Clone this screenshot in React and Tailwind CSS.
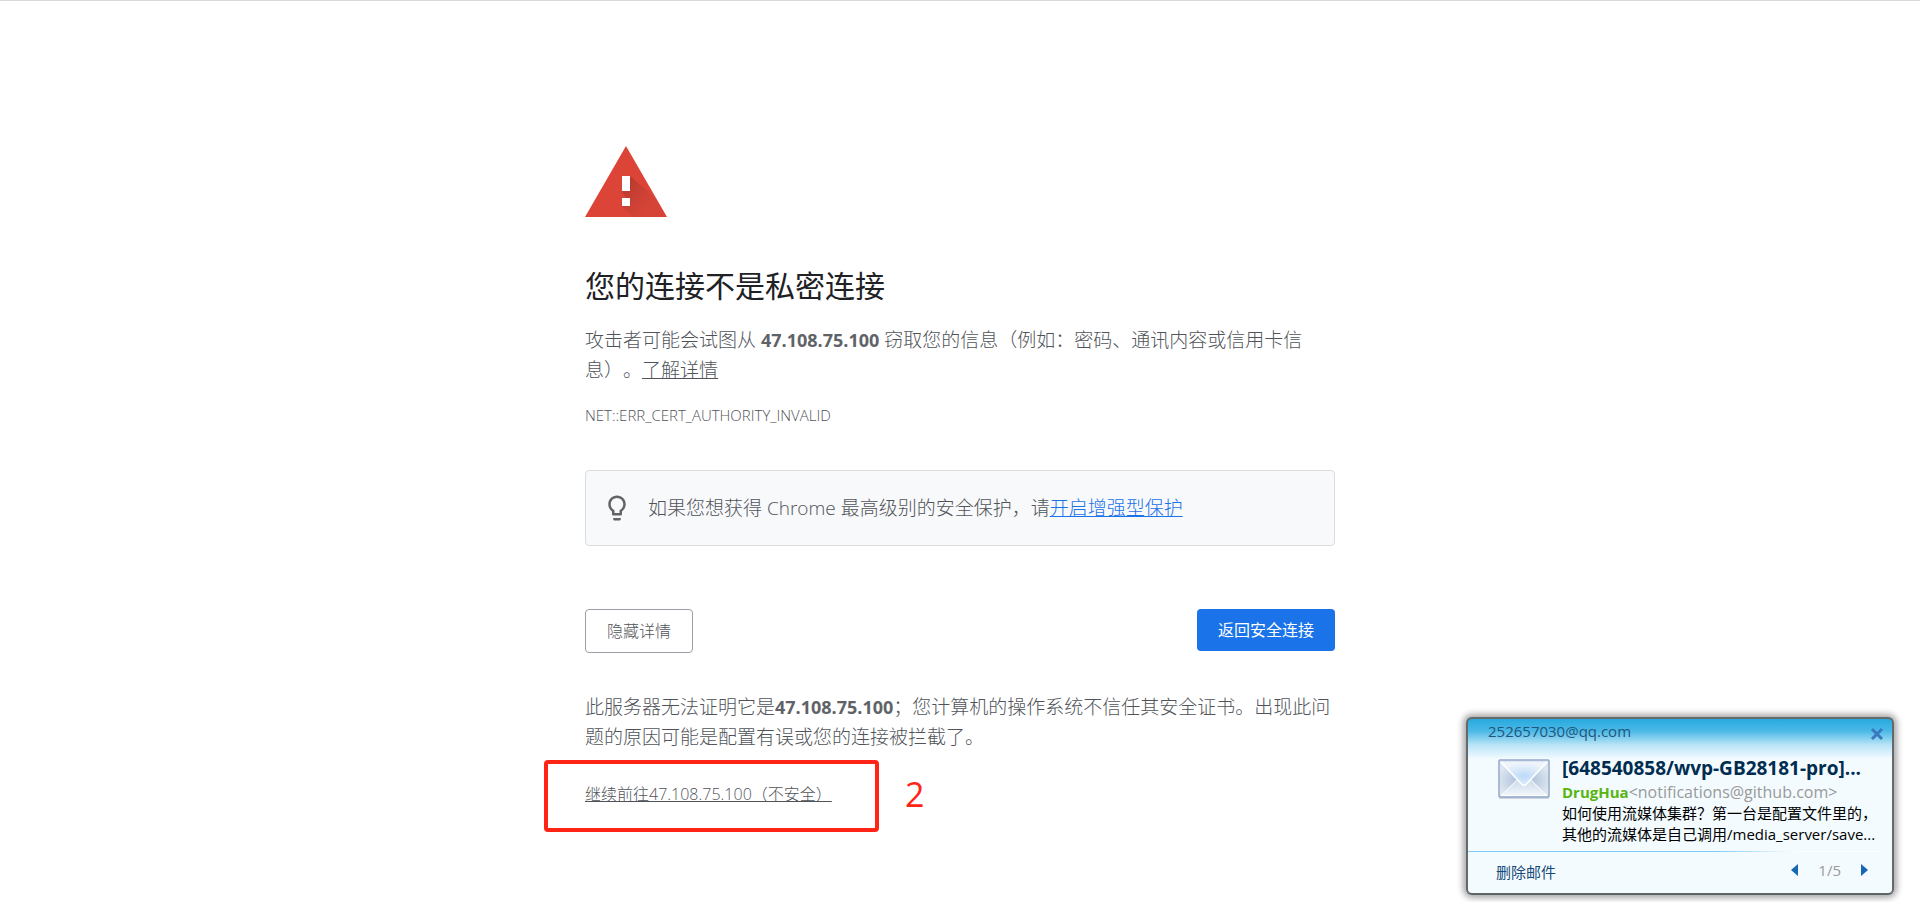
import React from "react";

const WarningIcon = () => (
  <svg viewBox="0 0 83 71" className="w-[83px] h-[71px]" aria-hidden="true">
    <defs>
      <linearGradient id="shade" x1="42" y1="36" x2="68" y2="62" gradientUnits="userSpaceOnUse">
        <stop offset="0" stopColor="#b93a2e" />
        <stop offset="0.6" stopColor="#cf4235" />
        <stop offset="1" stopColor="#d64437" />
      </linearGradient>
    </defs>
    <path d="M41 0 82 71H0z" fill="#db4437" />
    <path d="M45 30 68 50 81 71H48L37 60 45 60 37 45 45 45z" fill="url(#shade)" />
    <path d="M37 30h8v15h-8zM37 52h8v8h-8z" fill="#fff" />
  </svg>
);

const BulbIcon = () => (
  <svg viewBox="0 0 24 24" className="w-[30px] h-[30px] shrink-0" fill="#646464" aria-hidden="true">
    <path d="M9 21c0 .5.4 1 1 1h4c.6 0 1-.5 1-1v-1H9v1zm3-19C8.100 2 5 5.100 5 9c0 2.400 1.200 4.500 3 5.700V17c0 .5.4 1 1 1h6c.6 0 1-.5 1-1v-2.300c1.800-1.300 3-3.400 3-5.700 0-3.900-3.100-7-7-7zm2.900 11.100-.9.6V16h-4v-2.300l-.9-.6C7.800 12.200 7 10.600 7 9c0-2.800 2.200-5 5-5s5 2.200 5 5c0 1.600-.8 3.200-2.100 4.100z" />
  </svg>
);

const EnvelopeIcon = () => (
  <svg viewBox="0 0 52 40" className="w-[52px] h-10 shrink-0" aria-hidden="true">
    <defs>
      <radialGradient id="paper" cx="0.5" cy="0.55" r="0.55">
        <stop offset="0" stopColor="#9fb6d3" />
        <stop offset="1" stopColor="#dfe8f2" />
      </radialGradient>
      <linearGradient id="front" x1="0" y1="0" x2="0" y2="1">
        <stop offset="0" stopColor="#c9d8e9" />
        <stop offset="1" stopColor="#f1f6fb" />
      </linearGradient>
      <radialGradient id="flap" cx="0.5" cy="0.6" r="0.55">
        <stop offset="0" stopColor="#bcdaf8" />
        <stop offset="1" stopColor="#eff4fa" />
      </radialGradient>
    </defs>
    <rect x="1" y="2" width="50" height="38" rx="1" fill="#cdd5df" />
    <rect x="1" y="1" width="50" height="37" rx="1" fill="url(#paper)" stroke="#94a9cb" strokeWidth="1.500" />
    <path d="M3 36.500 20 20h12l17 16.500z" fill="url(#front)" stroke="#fff" />
    <path d="M3 3h46L28.500 25q-2.500 2.500-5 0z" fill="url(#flap)" />
    <path d="M3 3 23.500 25q2.500 2.500 5 0L49 3" fill="none" stroke="#fff" strokeWidth="1.500" />
  </svg>
);

const MailPopup = () => (
  <aside className="absolute right-[26px] bottom-[7px] w-[428px] rounded-md border-2 border-[#64696a] border-b-[#5d6566] bg-[#f3fbff] bg-[linear-gradient(#27a9df_0px,#4bb9e6_12px,#b9e4f7_26px,#f3fbff_40px)] shadow-[0_0_6px_3px_rgba(0,0,0,0.35)]">
    <div className="flex items-start justify-between pl-5 pr-2 pt-0.5 h-7">
      <span className="text-[15px] leading-5 text-[#21557c]">252657030@qq.com</span>
      <button type="button" aria-label="关闭" className="mt-1.5">
        <svg viewBox="0 0 14 14" className="w-3.5 h-3.5" stroke="#3a78bf" strokeWidth="3">
          <path d="m2 2 10 10M12 2 2 12" />
        </svg>
      </button>
    </div>
    <div className="flex gap-3 pl-[30px] pr-2 pt-2 pb-1.5">
      <div className="pt-1">
        <EnvelopeIcon />
      </div>
      <div className="min-w-0 whitespace-nowrap text-[15px]">
        <h2 className="text-[19px] leading-[26px] font-bold text-[#002c50]">[648540858/wvp-GB28181-pro]...</h2>
        <p className="leading-[22px] text-[#999]">
          <b className="text-[#58b510]">DrugHua</b>
          <span className="text-[16px]">&lt;notifications@github.com&gt;</span>
        </p>
        <p className="leading-[21px] text-black">如何使用流媒体集群？第一台是配置文件里的，</p>
        <p className="leading-[21px] text-black">其他的流媒体是自己调用/media_server/save...</p>
      </div>
    </div>
    <div className="h-px mr-2.5 bg-linear-to-r from-[#7bcdf5] from-60% to-white to-80%" />
    <div className="flex items-start justify-between h-[41px] pl-7 pr-6 text-[15px]">
      <a href="#delete" className="leading-10 text-[#164a78]">删除邮件</a>
      <div className="flex items-center gap-5 leading-9 text-[#999]">
        <button type="button" aria-label="上一封">
          <svg viewBox="0 0 7 12" className="w-[7px] h-3" fill="#1667b5"><path d="M7 0v12L0 6z" /></svg>
        </button>
        <span>1/5</span>
        <button type="button" aria-label="下一封">
          <svg viewBox="0 0 7 12" className="w-[7px] h-3" fill="#1667b5"><path d="M0 0v12l7-6z" /></svg>
        </button>
      </div>
    </div>
  </aside>
);

export default function App() {
  return (
    <div className="relative min-h-screen border-t border-[#dadada] bg-white font-['Open_Sans','Noto_Sans_CJK_SC',sans-serif] text-[19px] leading-[30px] text-[#505459] [text-spacing-trim:space-all]">
      <main lang="zh-CN" className="mx-auto w-full max-w-[750px] pt-[145px] font-light">
        <WarningIcon />
        <h1 className="mt-[51px] text-[30px] leading-9 font-normal text-[#202124]">您的连接不是私密连接</h1>
        <p className="mt-[21px]">
          攻击者可能会试图从 <strong className="text-[18px] font-bold text-[#5f6368]">47.108.75.100</strong> 窃取您的信息（例如：密码、通讯内容或信用卡信息）。
          <a href="#learn-more" className="underline">了解详情</a>
        </p>
        <p className="mt-[18px] text-[15px] leading-6">NET::ERR_CERT_AUTHORITY_INVALID</p>

        <div className="mt-[43px] flex items-center gap-4 rounded border border-[#dadce0] bg-[#f8f9fb] px-4 py-[22px]">
          <BulbIcon />
          <p>
            如果您想获得 Chrome 最高级别的安全保护，请
            <a href="#enhanced" className="text-[#1a73e8] underline">开启增强型保护</a>
          </p>
        </div>

        <div className="mt-[63px] flex items-start justify-between text-[16px] leading-5">
          <button type="button" className="rounded border border-[#9aa0a6] px-[21px] py-[11px]">隐藏详情</button>
          <button type="button" className="rounded bg-[#1a73e8] px-[21px] py-[11px] font-normal text-white">返回安全连接</button>
        </div>

        <p className="mt-[39px]">
          此服务器无法证明它是<strong className="text-[18px] font-bold text-[#5f6368]">47.108.75.100</strong>；您计算机的操作系统不信任其安全证书。出现此问题的原因可能是配置有误或您的连接被拦截了。
        </p>
        <div className="-ml-[41px] mt-2 flex items-center gap-[26px]">
          <div className="w-[335px] rounded border-4 border-[#ff2416] px-[37px] pt-[18px] pb-[22px] text-[16px] leading-6">
            <a href="#proceed" className="whitespace-nowrap underline">继续前往47.108.75.100（不安全）</a>
          </div>
          <span className="pb-1 text-[34px] font-normal text-[#ff2416]">2</span>
        </div>
      </main>
      <MailPopup />
    </div>
  );
}
